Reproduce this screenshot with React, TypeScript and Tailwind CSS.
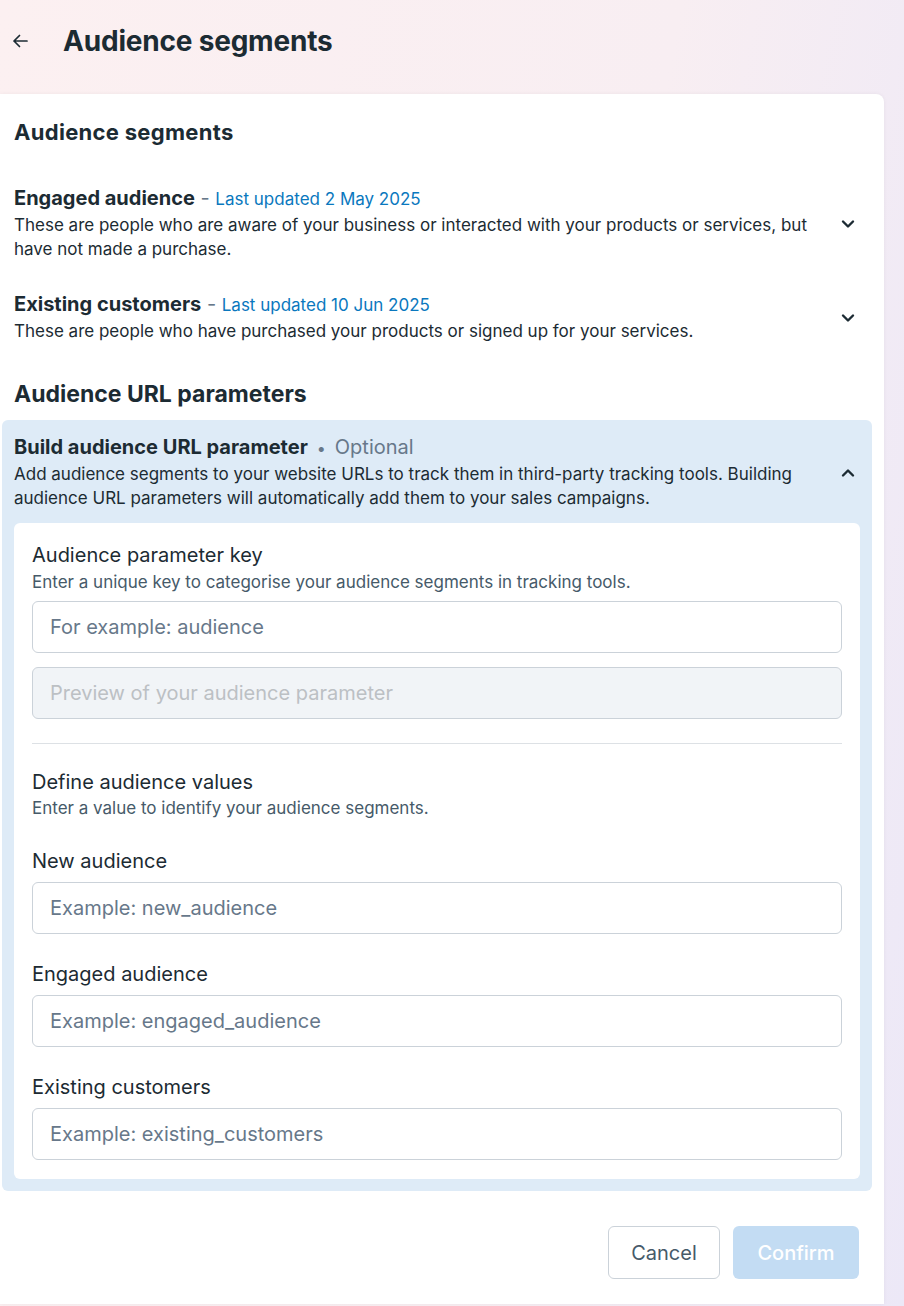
import React from 'react';

const segments = [
  {
    name: 'Engaged audience',
    updated: 'Last updated 2 May 2025',
    desc: 'These are people who are aware of your business or interacted with your products or services, but have not made a purchase.',
  },
  {
    name: 'Existing customers',
    updated: 'Last updated 10 Jun 2025',
    desc: 'These are people who have purchased your products or signed up for your services.',
  },
];

const values = [
  { label: 'New audience', placeholder: 'Example: new_audience' },
  { label: 'Engaged audience', placeholder: 'Example: engaged_audience' },
  { label: 'Existing customers', placeholder: 'Example: existing_customers' },
];

const Chevron: React.FC<{ up?: boolean }> = ({ up }) => (
  <svg width="16" height="16" viewBox="0 0 16 16" className={up ? 'shrink-0 rotate-180' : 'shrink-0'}>
    <path d="M3 5.5 8 10.5 13 5.5" fill="none" stroke="#1c2b33" strokeWidth="2.4" strokeLinecap="round" strokeLinejoin="round" />
  </svg>
);

const TextInput: React.FC<{ placeholder: string; disabled?: boolean }> = ({ placeholder, disabled }) => (
  <input
    disabled={disabled}
    placeholder={placeholder}
    className={
      disabled
        ? 'h-[52px] w-full rounded-[6px] border border-[#cbd2d9] bg-[#f1f4f7] px-[17px] text-[20px] outline-none placeholder:text-[#bcc0c4]'
        : 'h-[52px] w-full rounded-[6px] border border-[#cbd2d9] bg-white px-[17px] text-[20px] outline-none placeholder:text-[#67788a]'
    }
  />
);

export default function App() {
  return (
    <div className="min-h-[1306px] w-full bg-[linear-gradient(100deg,#fcf0f1_0%,#f8eef2_60%,#ece8f7_100%)] font-['Inter','Noto_Sans',sans-serif] text-[#1c2b33]">
      {/* page header */}
      <div className="flex h-[82px] items-center">
        <button className="ml-[4px] flex h-8 w-8 items-center justify-center">
          <svg width="18" height="18" viewBox="0 0 18 18">
            <path d="M16 9H3M8.5 3.5 3 9l5.5 5.5" fill="none" stroke="#1c2b33" strokeWidth="1.7" strokeLinecap="round" strokeLinejoin="round" />
          </svg>
        </button>
        <h1 className="ml-[27px] text-[28px] font-bold tracking-[-0.2px]">Audience segments</h1>
      </div>

      <div className="mt-3 w-[884px] rounded-tr-[8px] bg-white pt-6 pb-[25px] shadow-[0_0_4px_rgba(0,0,0,0.05)]">
        <h2 className="px-[14px] text-[22px] font-bold leading-[28px] tracking-[0.3px]">Audience segments</h2>

        <div className="mt-[40px] flex flex-col gap-[31px]">
          {segments.map((s) => (
            <div key={s.name} className="flex items-center pl-[14px] pr-[28px]">
              <div className="flex-1 pr-[20px]">
                <div className="text-[20px] leading-[24px]">
                  <span className="font-bold">{s.name}</span>
                  <span className="text-[#67788a]"> - </span>
                  <span className="text-[17px] text-[#0a78be]">{s.updated}</span>
                </div>
                <p className="mt-[2px] text-[17px] leading-[24px]">{s.desc}</p>
              </div>
              <Chevron />
            </div>
          ))}
        </div>

        <h2 className="mt-[37px] px-[14px] text-[23px] font-bold leading-[28px]">Audience URL parameters</h2>

        <div className="mt-3 ml-[2px] w-[870px] rounded-[6px] bg-[#deebf7] px-3 pt-[15px] pb-3">
          <div className="flex items-center pr-[4px]">
            <div className="flex-1 pr-[20px]">
              <div className="text-[20px] leading-[24px]">
                <span className="font-bold">Build audience URL parameter</span>
                <span className="mx-[9px] text-[16px] text-[#67788a]">•</span>
                <span className="text-[#67788a]">Optional</span>
              </div>
              <p className="mt-[2px] text-[17px] leading-[24px]">
                Add audience segments to your website URLs to track them in third-party tracking tools. Building audience URL parameters will automatically add them to your sales campaigns.
              </p>
            </div>
            <Chevron up />
          </div>

          <div className="mt-[13px] rounded-[6px] bg-white px-[18px] pt-5 pb-[19px]">
            <div className="text-[20px] leading-[24px]">Audience parameter key</div>
            <div className="mt-[4px] text-[17px] leading-[22px] text-[#465a69]">
              Enter a unique key to categorise your audience segments in tracking tools.
            </div>
            <div className="mt-2">
              <TextInput placeholder="For example: audience" />
            </div>
            <div className="mt-[14px]">
              <TextInput placeholder="Preview of your audience parameter" disabled />
            </div>

            <div className="mt-6 h-px bg-[#dde1e5]" />

            <div className="mt-[26px] text-[20px] leading-[24px]">Define audience values</div>
            <div className="mt-[3px] text-[17px] leading-[22px] text-[#465a69]">
              Enter a value to identify your audience segments.
            </div>

            <div className="mt-[30px] flex flex-col gap-[28px]">
              {values.map((v) => (
                <div key={v.label}>
                  <div className="text-[20px] leading-[24px]">{v.label}</div>
                  <div className="mt-[9px]">
                    <TextInput placeholder={v.placeholder} />
                  </div>
                </div>
              ))}
            </div>
          </div>
        </div>

        <div className="mt-[35px] flex justify-end gap-[13px] pr-[25px]">
          <button className="h-[53px] w-[112px] rounded-[6px] border border-[#cbd2d9] bg-white text-[20px] text-[#465a69]">
            Cancel
          </button>
          <button className="h-[53px] w-[126px] rounded-[6px] bg-[#c3dcf3] text-[20px] font-medium text-white">
            Confirm
          </button>
        </div>
      </div>
    </div>
  );
}
